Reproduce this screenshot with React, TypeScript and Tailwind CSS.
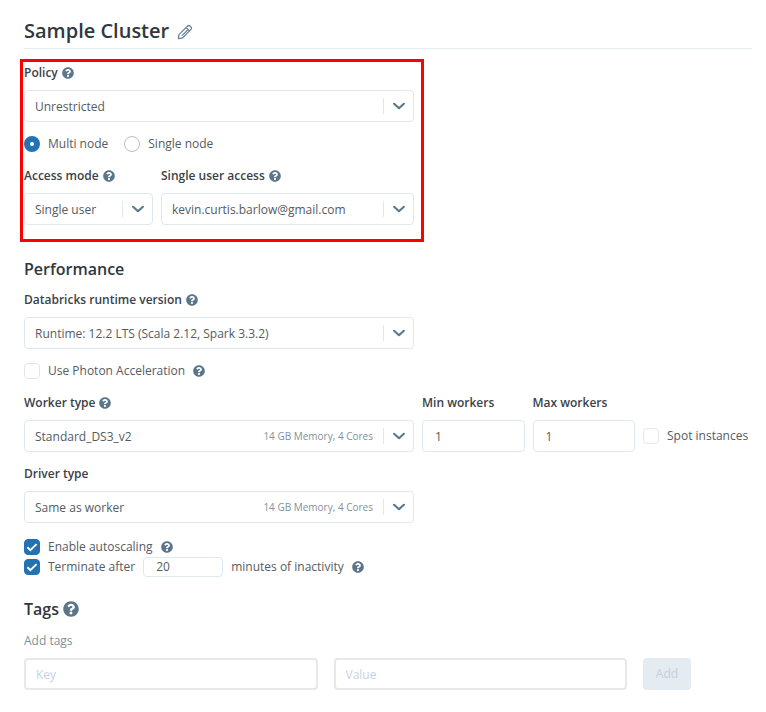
import { useState } from "react";
import type { ReactNode } from "react";
import { FaQuestionCircle } from "react-icons/fa";

type SelectFieldProps = {
  id: string;
  label: string;
  options: string[];
  help?: boolean;
  hint?: string;
};

function Help() {
  return <FaQuestionCircle aria-hidden="true" className="size-3 text-[#5b7589]" />;
}

function FieldLabel({ id, help, children }: { id: string; help?: boolean; children: ReactNode }) {
  return (
    <label
      htmlFor={id}
      className="flex items-center gap-1 text-xs leading-5 font-semibold whitespace-nowrap text-[#3a4249]"
    >
      {children}
      {help && <Help />}
    </label>
  );
}

function SelectField({ id, label, options, help, hint }: SelectFieldProps) {
  return (
    <div className="flex min-w-0 flex-col gap-[7px]">
      <FieldLabel id={id} help={help}>
        {label}
      </FieldLabel>
      <div className="relative">
        <select
          id={id}
          className="block h-8 w-full appearance-none rounded border border-[#dfe8f0] bg-white pt-0.5 pr-8 pl-2.5 text-xs text-[#555b61]"
        >
          {options.map((option) => (
            <option key={option}>{option}</option>
          ))}
        </select>
        <div className="pointer-events-none absolute inset-y-0 right-0 flex items-center pr-2">
          {hint && <span className="pr-2.5 text-[10px] text-[#84909a]">{hint}</span>}
          <span className="h-4 w-px bg-[#dfe8f0]" />
          <svg viewBox="0 0 14 14" fill="none" className="ml-2 size-3.5 text-[#5b7589]">
            <path d="M2.1 4.8L7 9.2l4.9-4.4" stroke="currentColor" strokeWidth="2.1" strokeLinecap="round" strokeLinejoin="round" />
          </svg>
        </div>
      </div>
    </div>
  );
}

function NumberField({ id, label }: { id: string; label: string }) {
  return (
    <div className="flex min-w-0 flex-col gap-[7px]">
      <FieldLabel id={id}>{label}</FieldLabel>
      <input
        id={id}
        type="text"
        inputMode="numeric"
        defaultValue="1"
        className="h-8 w-full rounded border border-[#dfe8f0] px-3 text-xs text-[#555b61]"
      />
    </div>
  );
}

function Checkbox({ label, defaultChecked }: { label: string; defaultChecked?: boolean }) {
  return (
    <label className="flex items-center gap-2 text-xs leading-5 whitespace-nowrap text-[#555b61]">
      <span className="relative block size-4">
        <input
          type="checkbox"
          defaultChecked={defaultChecked}
          className="peer block size-4 appearance-none rounded border border-[#dfe8f0] bg-white checked:border-[#2272b4] checked:bg-[#2272b4]"
        />
        <svg viewBox="0 0 16 16" fill="none" className="pointer-events-none absolute inset-0 hidden size-4 peer-checked:block">
          <path d="M3.4 8.2l3 2.9 6.2-6" stroke="white" strokeWidth="2" />
        </svg>
      </span>
      {label}
    </label>
  );
}

function NodeRadio({ label, checked, onChange }: { label: string; checked: boolean; onChange: () => void }) {
  return (
    <label className="flex items-center gap-2 text-xs leading-5 text-[#555b61]">
      <input
        type="radio"
        name="nodes"
        checked={checked}
        onChange={onChange}
        className="size-4 appearance-none rounded-full border border-[#b4bfc9] bg-white checked:border-6 checked:border-[#2272b4]"
      />
      {label}
    </label>
  );
}

export default function App() {
  const [nodes, setNodes] = useState("multi");

  return (
    <main className="bg-white px-6 pt-4 pr-3.5 pb-5 font-['Open_Sans','Noto_Sans',sans-serif]">
      <header className="flex h-[33px] items-center gap-2 border-b border-[#e4ecf2] pb-0.5">
        <h1 className="text-xl font-semibold text-[#30383f]">Sample Cluster</h1>
        <button type="button" aria-label="Rename cluster" className="pt-0.5 text-[#6f8799]">
          <svg
            viewBox="0 0 16 16"
            fill="none"
            stroke="currentColor"
            strokeWidth="1.3"
            strokeLinecap="round"
            strokeLinejoin="round"
            className="size-4"
          >
            <path d="M1.4 14.6l.6-4 8.4-8.4a2 2 0 0 1 2.8 0l.6.6a2 2 0 0 1 0 2.8L5.4 14z" />
            <path d="M9.2 3.6l3.2 3.2M10.4 6.2l-5.2 5.2" />
          </svg>
        </button>
      </header>

      <section className="mt-2.5 -ml-1 max-w-[404px] border-3 border-[#fe0000] pt-px pr-[7px] pb-3.5 pl-px">
        <SelectField id="policy" label="Policy" help options={["Unrestricted"]} />
        <div className="mt-3 flex gap-4">
          <NodeRadio label="Multi node" checked={nodes === "multi"} onChange={() => setNodes("multi")} />
          <NodeRadio label="Single node" checked={nodes === "single"} onChange={() => setNodes("single")} />
        </div>
        <div className="mt-3 grid grid-cols-[129px_1fr] gap-2">
          <SelectField id="access" label="Access mode" help options={["Single user"]} />
          <SelectField id="user" label="Single user access" help options={["kevin.curtis.barlow@gmail.com"]} />
        </div>
      </section>

      <section className="mt-[13px]">
        <h2 className="mb-[7px] text-base leading-7 font-semibold text-[#30383f]">Performance</h2>
        <div className="max-w-[390px]">
          <SelectField
            id="runtime"
            label="Databricks runtime version"
            help
            options={["Runtime: 12.2 LTS (Scala 2.12, Spark 3.3.2)"]}
          />
        </div>
        <div className="mt-3 flex items-center gap-2">
          <Checkbox label="Use Photon Acceleration" />
          <Help />
        </div>
        <div className="mt-3 grid grid-cols-[390px_1fr_1fr_109px] gap-2">
          <SelectField id="worker" label="Worker type" help hint="14 GB Memory, 4 Cores" options={["Standard_DS3_v2"]} />
          <NumberField id="min" label="Min workers" />
          <NumberField id="max" label="Max workers" />
          <div className="flex h-8 items-center self-end">
            <Checkbox label="Spot instances" />
          </div>
        </div>
        <div className="mt-3 max-w-[390px]">
          <SelectField id="driver" label="Driver type" hint="14 GB Memory, 4 Cores" options={["Same as worker"]} />
        </div>
        <div className="mt-3.5 flex items-center gap-2">
          <Checkbox label="Enable autoscaling" defaultChecked />
          <Help />
        </div>
        <div className="flex items-center gap-2 text-xs leading-5 text-[#555b61]">
          <Checkbox label="Terminate after" defaultChecked />
          <input
            type="text"
            inputMode="numeric"
            aria-label="Minutes of inactivity"
            defaultValue="20"
            className="h-5 w-20 rounded border border-[#dfe8f0] px-3"
          />
          <span>minutes of inactivity</span>
          <Help />
        </div>
      </section>

      <section className="mt-[18px]">
        <h2 className="flex items-center gap-1 text-base leading-7 font-semibold text-[#30383f]">
          Tags
          <FaQuestionCircle aria-hidden="true" className="size-4 text-[#5b7589]" />
        </h2>
        <p className="mt-2 text-xs leading-5 text-[#84909a]">Add tags</p>
        <div className="mt-[7px] flex max-w-[667px] gap-4">
          <input
            type="text"
            aria-label="Key"
            placeholder="Key"
            className="h-8 min-w-0 flex-1 rounded border-2 border-[#e8e8e8] px-2.5 text-xs placeholder:text-[#c5d3e0]"
          />
          <input
            type="text"
            aria-label="Value"
            placeholder="Value"
            className="h-8 min-w-0 flex-1 rounded border-2 border-[#e8e8e8] px-2.5 text-xs placeholder:text-[#c5d3e0]"
          />
          <button type="button" disabled className="h-8 w-12 rounded bg-[#e4ebf1] text-xs text-[#c3d0dd]">
            Add
          </button>
        </div>
      </section>
    </main>
  );
}
